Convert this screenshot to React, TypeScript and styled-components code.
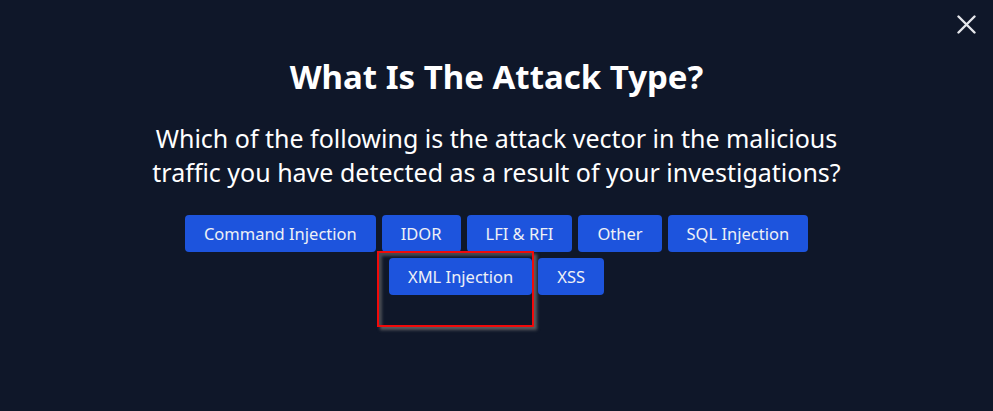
import styled, { createGlobalStyle } from 'styled-components';

const GlobalStyle = createGlobalStyle`
  html, body {
    margin: 0;
    padding: 0;
    background: #0f1729;
  }
  body {
    font-family: "Noto Sans", "Open Sans", sans-serif;
  }
`;

const ANSWERS = [
  'Command Injection',
  'IDOR',
  'LFI & RFI',
  'Other',
  'SQL Injection',
  'XML Injection',
  'XSS',
];

const Modal = styled.div`
  position: relative;
  box-sizing: border-box;
  width: 993px;
  height: 411px;
  padding-top: 57px;
  background: #0f1729;
  display: flex;
  flex-direction: column;
  align-items: center;
`;

const CloseButton = styled.button`
  position: absolute;
  top: 15px;
  right: 17px;
  padding: 0;
  border: none;
  background: transparent;
  color: #e5e7eb;
  display: flex;
  cursor: pointer;
`;

const Title = styled.h2`
  margin: 0;
  font-size: 33px;
  line-height: 40px;
  font-weight: 700;
  color: #ffffff;
  text-align: center;
`;

const Question = styled.p`
  margin: 24px 0 0;
  font-size: 25px;
  line-height: 34px;
  color: #ffffff;
  text-align: center;
`;

const Options = styled.div`
  margin-top: 26px;
  width: 660px;
  display: flex;
  flex-wrap: wrap;
  justify-content: center;
  gap: 6px;
`;

const OptionSlot = styled.div`
  position: relative;
`;

const OptionButton = styled.button`
  height: 37px;
  padding: 0 19px;
  border: none;
  border-radius: 4px;
  background: #1d54dd;
  color: #eef0f6;
  font-family: "Noto Sans", "Open Sans", sans-serif;
  font-size: 16.5px;
  cursor: pointer;
`;

const Highlight = styled.div`
  position: absolute;
  left: -12px;
  top: -7px;
  width: 157px;
  height: 76px;
  box-sizing: border-box;
  border: 2px solid #f10a0a;
  box-shadow: inset 3px 3px 3px rgba(110, 110, 110, 0.6),
    3px 3px 3px rgba(110, 110, 110, 0.8);
  pointer-events: none;
`;

export default function App() {
  return (
    <>
      <GlobalStyle />
      <Modal>
        <CloseButton aria-label="Close">
          <svg width="19" height="19" viewBox="0 0 19 19">
            <path d="M1.5 1.5 L17.5 17.5 M17.5 1.5 L1.5 17.5" stroke="currentColor" strokeWidth="2.4" strokeLinecap="round" />
          </svg>
        </CloseButton>
        <Title>What Is The Attack Type?</Title>
        <Question>
          Which of the following is the attack vector in the malicious
          <br />
          traffic you have detected as a result of your investigations?
        </Question>
        <Options>
          {ANSWERS.map((answer) => (
            <OptionSlot key={answer}>
              {answer === 'XML Injection' && <Highlight />}
              <OptionButton>{answer}</OptionButton>
            </OptionSlot>
          ))}
        </Options>
      </Modal>
    </>
  );
}
